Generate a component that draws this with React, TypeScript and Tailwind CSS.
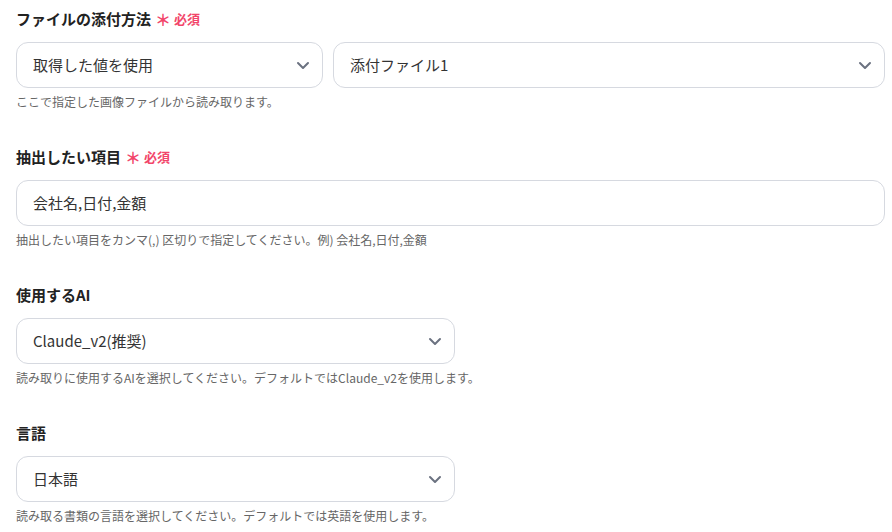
import React from 'react';

const font = { fontFamily: '"Noto Sans CJK JP", "Noto Sans", sans-serif' };

function Chevron() {
  return (
    <svg width="14" height="9" viewBox="0 0 14 9" fill="none" className="shrink-0">
      <path d="M2 2l5 5 5-5" stroke="#6b7280" strokeWidth="2" strokeLinecap="round" strokeLinejoin="round" />
    </svg>
  );
}

function Label({ text, required }: { text: string; required?: boolean }) {
  return (
    <div className="flex items-center h-[22px] leading-[22px]">
      <span className="text-[15px] font-bold text-[#222]">{text}</span>
      {required && (
        <span className="ml-[4px] flex items-center text-[13px] font-bold text-[#f2456a]">
          <span className="text-[16px] mr-[3px]">＊</span>必須
        </span>
      )}
    </div>
  );
}

function Select({ value, className }: { value: string; className: string }) {
  return (
    <div className={`h-[46px] border border-[#d6d9e0] rounded-[12px] bg-white flex items-center justify-between pl-4 pr-[12px] ${className}`}>
      <span className="text-[15px] text-[#333]">{value}</span>
      <Chevron />
    </div>
  );
}

function Help({ text }: { text: string }) {
  return <p className="mt-[5px] h-[18px] text-[12px] leading-[18px] text-[#666]">{text}</p>;
}

export default function App() {
  return (
    <div className="w-[892px] h-[532px] bg-white overflow-hidden pt-2 pl-4" style={font}>
      <div className="w-[869px] flex flex-col gap-[35px]">
        <section>
          <Label text="ファイルの添付方法" required />
          <div className="mt-[12px] flex gap-[10px]">
            <Select value="取得した値を使用" className="w-[307px]" />
            <Select value="添付ファイル1" className="flex-1" />
          </div>
          <Help text="ここで指定した画像ファイルから読み取ります。" />
        </section>

        <section>
          <Label text="抽出したい項目" required />
          <div className="mt-[12px] h-[46px] border border-[#d6d9e0] rounded-[12px] bg-white flex items-center pl-4">
            <span className="text-[15px] text-[#333]">会社名,日付,金額</span>
          </div>
          <Help text="抽出したい項目をカンマ(,) 区切りで指定してください。例) 会社名,日付,金額" />
        </section>

        <section>
          <Label text="使用するAI" />
          <Select value="Claude_v2(推奨)" className="mt-[12px] w-[439px]" />
          <Help text="読み取りに使用するAIを選択してください。デフォルトではClaude_v2を使用します。" />
        </section>

        <section>
          <Label text="言語" />
          <Select value="日本語" className="mt-[12px] w-[439px]" />
          <Help text="読み取る書類の言語を選択してください。デフォルトでは英語を使用します。" />
        </section>
      </div>
    </div>
  );
}
